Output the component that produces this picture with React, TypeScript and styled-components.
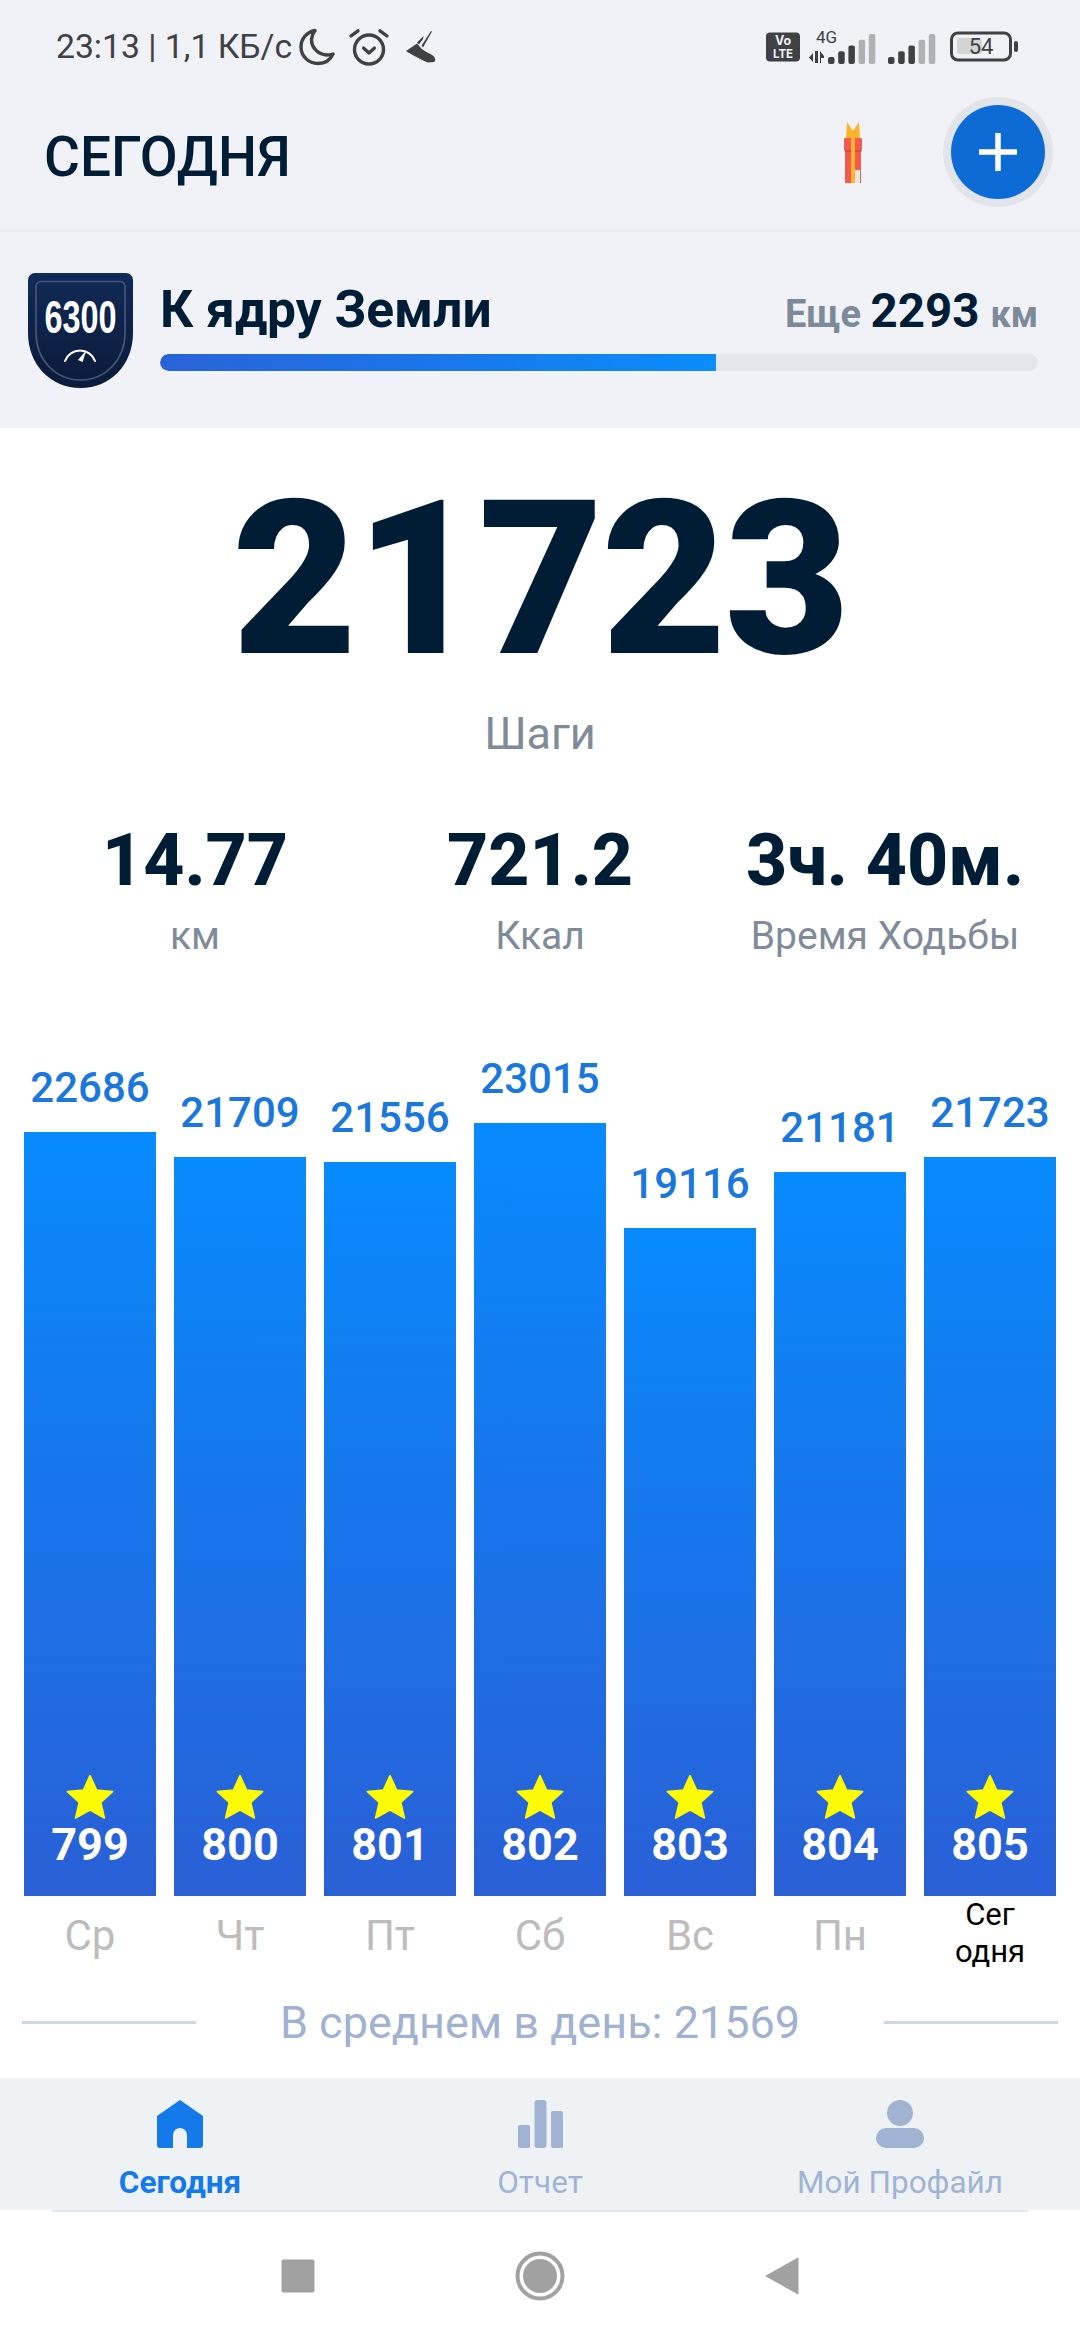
import React from "react";
import styled, { createGlobalStyle } from "styled-components";

const Global = createGlobalStyle`
  html, body { margin: 0; padding: 0; background: #fff; }
  body { font-family: Roboto, "Noto Sans", sans-serif; }
`;

const Page = styled.div`
  width: 1080px; height: 2340px; display: flex; flex-direction: column; overflow: hidden; background: #fff;
`;
const TopArea = styled.div`
  background: #f0f2f7; height: 232px; box-sizing: border-box; border-bottom: 2px solid #e8eaef;
  display: flex; flex-direction: column;
`;
const StatusBar = styled.div`
  height: 94px; padding: 0 62px 0 56px; box-sizing: border-box; display: flex; align-items: center; justify-content: space-between;
  color: #3f4145;
`;
const StatusLeft = styled.div`display: flex; align-items: center;`;
const StatusTime = styled.span`font-size: 33.7px; line-height: 94px; margin-right: 7px;`;
const StatusIconSlot = styled.span<{ $gap?: number }>`display: flex; margin-right: ${p => p.$gap ?? 0}px;`;
const StatusRight = styled.div`display: flex; align-items: center; gap: 9px;`;

const AppBar = styled.div`
  flex: 1; display: flex; align-items: center; padding: 0 27px 0 44px; margin-top: -2px;
`;
const Title = styled.h1`
  flex: 1; margin: 0; font-size: 55px; font-weight: 500; color: #001d36; position: relative; top: -4px;
`;
const Gift = styled.span`display: flex; margin-right: 81px; position: relative; top: -9px;`;
const AddRing = styled.div`
  width: 110px; height: 110px; border-radius: 50%; background: #e2e4e9; display: flex; align-items: center; justify-content: center; box-sizing: border-box; position: relative; top: -9px;
`;
const AddButton = styled.button`
  width: 94px; height: 94px; border: 0; padding: 0; border-radius: 50%; background: #0d6bd6; display: flex; align-items: center; justify-content: center;
`;

const GoalBand = styled.section`
  height: 196px; background: #f0f2f7; display: flex; padding: 41px 42px 0 28px; box-sizing: border-box; gap: 27px;
`;
const GoalBody = styled.div`flex: 1; display: flex; flex-direction: column; margin-top: -2px;`;
const GoalRow = styled.div`display: flex; align-items: baseline; justify-content: space-between; height: 72px; margin-top: 3px;`;
const GoalName = styled.div`font-size: 51.5px; font-weight: 700; color: #001d36; line-height: 72px;`;
const GoalLeft = styled.div`font-size: 38px; font-weight: 700; color: #7c8a9a;`;
const GoalKm = styled.b`font-size: 47.5px; font-weight: 700; color: #001d36; margin: 0 11px 0 0;`;
const GoalUnit = styled.span`font-size: 36px;`;
const Track = styled.div`height: 17px; border-radius: 9px; background: #e3e6eb; margin-top: 8px; overflow: hidden;`;
const Fill = styled.div`height: 100%; border-radius: 9px 0 0 9px; background: linear-gradient(90deg, #2a62d8, #0a8cfb);`;

const Steps = styled.div`
  text-align: center; font-size: 216px; font-weight: 900; line-height: 194px; color: #001d36; margin-top: 55px; letter-spacing: -2px;
`;
const StepsLabel = styled.div`
  text-align: center; font-size: 45px; color: #7f8b99; line-height: 50px; margin-top: 32px;
`;
const Metrics = styled.div`
  display: grid; grid-template-columns: repeat(3, 300px); justify-content: space-between; padding: 0 45px; margin-top: 62px;
`;
const Metric = styled.div`text-align: center; white-space: nowrap;`;
const MetricValue = styled.div`font-size: 71.5px; font-weight: 800; color: #001d36; line-height: 80px;`;
const MetricLabel = styled.div`font-size: 39px; color: #7f8b99; line-height: 44px; margin-top: 13px;`;

const Chart = styled.div`
  display: flex; align-items: flex-end; justify-content: space-between; padding: 0 24px; height: 938px; box-sizing: border-box;
`;
const Column = styled.div`width: 132px; display: flex; flex-direction: column; align-items: center;`;
const ColumnValue = styled.div`font-size: 42px; font-weight: 500; color: #1a78dc; line-height: 48px; margin-bottom: 20px;`;
const Bar = styled.div`
  width: 100%; display: flex; flex-direction: column; align-items: center; justify-content: flex-end; padding-bottom: 27px; box-sizing: border-box;
  background: linear-gradient(180deg, #078afd 0%, #2a5fd6 100%);
`;
const BarStar = styled.span`display: flex; margin-bottom: 1px;`;
const BarCount = styled.div`font-size: 45px; font-weight: 700; line-height: 48px; color: #fff;`;
const Days = styled.div`display: flex; justify-content: space-between; padding: 0 24px; height: 88px;`;
const Day = styled.div<{ $today?: boolean }>`
  width: 132px; text-align: center; box-sizing: border-box;
  font-size: ${p => (p.$today ? 31 : 42)}px; line-height: ${p => (p.$today ? 37 : 50)}px; padding-top: ${p => (p.$today ? 0 : 15)}px;
  color: ${p => (p.$today ? "#000" : "#bcbcbc")};
`;
const Average = styled.div`
  display: flex; align-items: center; justify-content: space-between; padding: 0 22px; height: 76px; box-sizing: border-box;
`;
const AverageLine = styled.span`width: 174px; height: 3px; background: #cdd6e6;`;
const AverageText = styled.span`font-size: 45px; color: #a1b1d0;`;

const TabBar = styled.nav`
  height: 132px; background: #eff2f5; display: grid; grid-template-columns: repeat(3, 360px); margin-top: 18px;
`;
const Tab = styled.div<{ $active?: boolean }>`
  display: flex; flex-direction: column; align-items: center; padding-top: 20px; box-sizing: border-box;
  color: ${p => (p.$active ? "#1479ea" : "#a1b3d2")};
`;
const TabIconBox = styled.span`height: 50px; display: flex; align-items: flex-end;`;
const TabLabel = styled.span<{ $active?: boolean }>`
  font-size: 31.5px; font-weight: ${p => (p.$active ? 700 : 400)}; line-height: 36px; margin-top: 17px;
`;
const TabRule = styled.div`height: 2px; background: #e2e4e8; margin: 0 52px;`;
const SystemNav = styled.div`
  flex: 1; display: grid; grid-template-columns: 34px 50px 34px; justify-content: center; column-gap: 200px; align-items: center; justify-items: center;
`;

const Star = () => (
  <svg width="48" height="46" viewBox="0 0 48 46">
    <path d="M24 1.5 L30.6 16 L46.6 17.6 L34.8 28.4 L38.4 44 L24 36 L9.6 44 L13.2 28.4 L1.4 17.6 L17.4 16 Z" fill="#fdfa05" stroke="#fdfa05" strokeWidth="1.6" strokeLinejoin="round" />
  </svg>
);

const Moon = () => (
  <svg width="36" height="38" viewBox="0 0 36 38" fill="none">
    <path d="M16 2.5 C8 4 2 10.5 2 19 C2 28 9.5 35.5 19 35.5 C26 35.5 31.5 31.5 34 26 C31 27 28 27.3 25 26.6 C17 25 12 18 12.6 11 C13 7.5 14.2 4.8 16 2.5 Z" stroke="#3f4145" strokeWidth="3.4" strokeLinejoin="round" />
  </svg>
);
const Alarm = () => (
  <svg width="42" height="38" viewBox="0 0 42 38" fill="none" stroke="#3f4145" strokeLinecap="round">
    <circle cx="21" cy="21.5" r="14.5" strokeWidth="3.4" />
    <path d="M15.5 20 L21 25 L26.5 20" strokeWidth="3.2" strokeLinejoin="round" />
    <path d="M3 8 L10 2.8 M39 8 L32 2.8" strokeWidth="3.4" />
  </svg>
);
const Shoe = () => (
  <svg width="30" height="34" viewBox="0 0 30 34" fill="#3f4145">
    <path d="M0 21 L11 13.5 L14 17 C18 22 24 23 27.5 26 C29.5 28 29.8 31 28 32 L22 32.5 C15 31 7 26 0 21 Z" />
    <path d="M15.6 15.5 L25 1 L26 1.5 L17 17.5 Z M11 12.5 L17.5 6 L17 9 L13 14.5 Z" />
    <path d="M3 23.5 L21 33" stroke="#f0f2f7" strokeWidth="0.9" />
  </svg>
);
const VoLte = () => (
  <svg width="34" height="30" viewBox="0 0 34 30">
    <rect width="34" height="29" y="0.5" rx="4" fill="#3f4145" />
    <text x="17" y="13" textAnchor="middle" fontSize="12.5" fontWeight="700" fontFamily="Inter, Roboto, sans-serif" fill="#f0f2f7">Vo</text>
    <text x="17" y="25.5" textAnchor="middle" fontSize="11.5" fontWeight="700" fontFamily="Inter, Roboto, sans-serif" fill="#f0f2f7">LTE</text>
  </svg>
);
const Signal = ({ four }: { four?: boolean }) => {
  const start = four ? 19 : 3;
  const width = four ? 67 : 53;
  return (
    <svg width={width} height="44" viewBox={`0 -4 ${width} 44`}>
      {four && (
        <>
          <text x="7" y="14" fontSize="17" fontFamily="Roboto, sans-serif" fill="#3f4145">4G</text>
          <path d="M0 28.5 L4 24 V33 Z M6 22 H9 V34 H6 Z M11 22 L15 27 V29 H12 V34 H11 Z" fill="#3f4145" />
        </>
      )}
      {[0, 1, 2, 3, 4].map(i => {
        const h = 7 + i * 5.75;
        return <rect key={i} x={start + i * 10.2} y={35 - h} width="6.5" height={h} rx="2" fill={i >= 3 ? "#b0b1b3" : "#3f4145"} />;
      })}
    </svg>
  );
};
const Battery = () => (
  <svg width="71" height="32" viewBox="0 0 71 32">
    <rect x="4.5" y="2" width="59" height="27" rx="6.5" fill="none" stroke="#3f4145" strokeWidth="3" />
    <rect x="10" y="7" width="25" height="16" rx="2" fill="#d3d4d6" />
    <text x="34" y="23" textAnchor="middle" fontSize="22" fontFamily="Roboto, sans-serif" fill="#3f4145">54</text>
    <rect x="67" y="10" width="4" height="11" rx="2" fill="#3f4145" />
  </svg>
);
const Plus = () => (
  <svg width="38" height="38" viewBox="0 0 38 38"><path d="M19 0 V38 M0 19 H38" stroke="#fff" strokeWidth="5.5" /></svg>
);
const GiftIcon = () => (
  <svg width="18" height="61" viewBox="0 0 18 61">
    <path d="M2 16 L3 0 L9 9 L15 0 L16 16 Z" fill="#f9b52a" />
    <rect x="1" y="16" width="16" height="45" fill="#f15a4f" />
    <rect x="0" y="16" width="18" height="13" rx="1" fill="#f15a4f" />
    <rect x="1" y="28" width="16" height="2" fill="#d24a42" />
    <rect x="7" y="8" width="4" height="53" fill="#fcb32e" />
    <rect x="11" y="48" width="5" height="13" fill="#e9e7e0" />
  </svg>
);
const Badge = () => (
  <svg width="105" height="115" viewBox="0 0 105 115">
    <defs>
      <linearGradient id="badgeFill" x1="0" y1="0" x2="0" y2="1">
        <stop offset="0" stopColor="#112a58" />
        <stop offset="1" stopColor="#0b1a38" />
      </linearGradient>
    </defs>
    <path d="M7 0 H98 A7 7 0 0 1 105 7 V60 C105 92 82 115 52.5 115 C23 115 0 92 0 60 V7 A7 7 0 0 1 7 0 Z" fill="url(#badgeFill)" />
    <path d="M13 8.5 H92 A5 5 0 0 1 97 13.5 V60 C97 86 78 107 52.5 107 C27 107 8 86 8 60 V13.5 A5 5 0 0 1 13 8.5 Z" fill="none" stroke="#47577b" strokeWidth="1.6" />
    <text transform="translate(52.5 60) scale(0.69 1)" textAnchor="middle" fontSize="47" fontWeight="700" fontFamily='"Liberation Sans", sans-serif' fill="#fff">6300</text>
    <path d="M37 88 A16 16 0 0 1 67 88" fill="none" stroke="#fff" strokeWidth="2" strokeLinecap="round" />
    <path d="M50 87 L58.5 77 L54.5 89 Z" fill="#fff" />
  </svg>
);
const HomeIcon = () => (
  <svg width="46" height="48" viewBox="0 0 46 48">
    <path d="M23 0 L46 16 V45 A3 3 0 0 1 43 48 H30 V35 A7 7 0 0 0 16 35 V48 H3 A3 3 0 0 1 0 45 V16 Z" fill="currentColor" />
  </svg>
);
const ReportIcon = () => (
  <svg width="45" height="48" viewBox="0 0 45 48" fill="currentColor">
    <rect x="0" y="25" width="12" height="23" rx="2" />
    <rect x="16.5" y="0" width="12" height="48" rx="3" />
    <rect x="33" y="11" width="12" height="37" rx="2" />
  </svg>
);
const ProfileIcon = () => (
  <svg width="48" height="48" viewBox="0 0 48 48" fill="currentColor">
    <ellipse cx="24" cy="13" rx="13" ry="13" />
    <rect x="0" y="28" width="48" height="20" rx="10" />
  </svg>
);
const NavSquare = () => (<svg width="34" height="34" viewBox="0 0 34 34"><rect x="0.5" y="0.5" width="33" height="33" rx="2" fill="#a1a1a1" /></svg>);
const NavCircle = () => (
  <svg width="50" height="50" viewBox="0 0 50 50">
    <circle cx="25" cy="25" r="22.5" fill="none" stroke="#a1a1a1" strokeWidth="4" />
    <circle cx="25" cy="25" r="17" fill="#a1a1a1" />
  </svg>
);
const NavBack = () => (<svg width="34" height="38" viewBox="0 0 34 38"><path d="M33 1 V37 L1 19 Z" fill="#a1a1a1" stroke="#a1a1a1" strokeLinejoin="round" /></svg>);

const days = [
  { value: 22686, height: 764, stars: 799, name: "Ср" },
  { value: 21709, height: 739, stars: 800, name: "Чт" },
  { value: 21556, height: 734, stars: 801, name: "Пт" },
  { value: 23015, height: 773, stars: 802, name: "Сб" },
  { value: 19116, height: 668, stars: 803, name: "Вс" },
  { value: 21181, height: 724, stars: 804, name: "Пн" },
  { value: 21723, height: 739, stars: 805, name: "Сег\nодня", today: true },
];

export default function App() {
  return (
    <Page>
      <Global />
      <TopArea>
        <StatusBar>
          <StatusLeft>
            <StatusTime>23:13 | 1,1 КБ/с</StatusTime>
            <StatusIconSlot $gap={13}><Moon /></StatusIconSlot>
            <StatusIconSlot $gap={16}><Alarm /></StatusIconSlot>
            <StatusIconSlot><Shoe /></StatusIconSlot>
          </StatusLeft>
          <StatusRight>
            <VoLte />
            <Signal four />
            <Signal />
            <Battery />
          </StatusRight>
        </StatusBar>
        <AppBar>
          <Title>СЕГОДНЯ</Title>
          <Gift><GiftIcon /></Gift>
          <AddRing><AddButton><Plus /></AddButton></AddRing>
        </AppBar>
      </TopArea>
      <GoalBand>
        <Badge />
        <GoalBody>
          <GoalRow>
            <GoalName>К ядру Земли</GoalName>
            <GoalLeft>Еще <GoalKm>2293</GoalKm><GoalUnit>км</GoalUnit></GoalLeft>
          </GoalRow>
          <Track><Fill style={{ width: `${(555 / 877) * 100}%` }} /></Track>
        </GoalBody>
      </GoalBand>
      <Steps>21723</Steps>
      <StepsLabel>Шаги</StepsLabel>
      <Metrics>
        <Metric><MetricValue>14.77</MetricValue><MetricLabel>км</MetricLabel></Metric>
        <Metric><MetricValue>721.2</MetricValue><MetricLabel>Ккал</MetricLabel></Metric>
        <Metric><MetricValue>3ч. 40м.</MetricValue><MetricLabel>Время Ходьбы</MetricLabel></Metric>
      </Metrics>
      <Chart>
        {days.map(d => (
          <Column key={d.name}>
            <ColumnValue>{d.value}</ColumnValue>
            <Bar style={{ height: d.height }}>
              <BarStar><Star /></BarStar>
              <BarCount>{d.stars}</BarCount>
            </Bar>
          </Column>
        ))}
      </Chart>
      <Days>
        {days.map(d => (
          <Day key={d.name} $today={d.today}>
            {d.name.split("\n").map(part => <div key={part}>{part}</div>)}
          </Day>
        ))}
      </Days>
      <Average>
        <AverageLine />
        <AverageText>В среднем в день: 21569</AverageText>
        <AverageLine />
      </Average>
      <TabBar>
        <Tab $active><TabIconBox><HomeIcon /></TabIconBox><TabLabel $active>Сегодня</TabLabel></Tab>
        <Tab><TabIconBox><ReportIcon /></TabIconBox><TabLabel>Отчет</TabLabel></Tab>
        <Tab><TabIconBox><ProfileIcon /></TabIconBox><TabLabel>Мой Профайл</TabLabel></Tab>
      </TabBar>
      <TabRule />
      <SystemNav>
        <NavSquare />
        <NavCircle />
        <NavBack />
      </SystemNav>
    </Page>
  );
}
